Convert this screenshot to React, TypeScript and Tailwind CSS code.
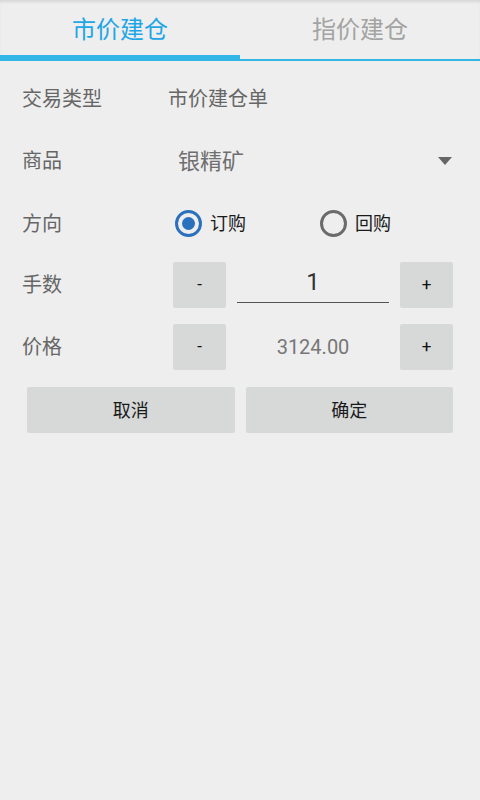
import { useState } from 'react'

const font = "font-['Roboto','Noto_Sans_CJK_SC',sans-serif]"

function Radio({ checked, label, onClick }: { checked: boolean; label: string; onClick: () => void }) {
  return (
    <button onClick={onClick} className="flex items-center gap-[8px]">
      <span
        className={`w-[27px] h-[27px] rounded-full border-[3px] flex items-center justify-center ${
          checked ? 'border-[#2b70bd]' : 'border-[#6b6b6b]'
        }`}
      >
        {checked && <span className="w-[13px] h-[13px] rounded-full bg-[#2b70bd]" />}
      </span>
      <span className="text-[18px] text-[#1a1a1a]">{label}</span>
    </button>
  )
}

function StepButton({ children, onClick }: { children: string; onClick?: () => void }) {
  return (
    <button
      onClick={onClick}
      className="w-[53px] h-[46px] rounded-[2px] bg-[#d7d8d8] text-[17px] text-[#111] flex items-center justify-center"
    >
      {children}
    </button>
  )
}

export default function App() {
  const [tab, setTab] = useState(0)
  const [dir, setDir] = useState(0)
  const [qty, setQty] = useState(1)
  const [price, setPrice] = useState(3124)

  return (
    <main className={`min-h-screen bg-[#eeeeee] ${font}`}>
      {/* Tabs */}
      <div className="h-[61px] flex border-b-2 border-[#33b5e5] shadow-[inset_0_3px_3px_-1px_rgba(0,0,0,0.10)]">
        {['市价建仓', '指价建仓'].map((t, i) => (
          <button
            key={t}
            onClick={() => setTab(i)}
            className={`flex-1 flex items-start justify-center pt-[12px] text-[24px] -mb-[2px] border-b-[6px] ${
              tab === i ? 'text-[#1fa6e6] border-[#33b5e5]' : 'text-[#a3a3a3] border-transparent'
            }`}
          >
            {t}
          </button>
        ))}
      </div>

      <div className="pt-[7px] pl-[22px] pr-[27px]">
        {/* 交易类型 */}
        <div className="h-[62px] flex items-center">
          <span className="w-[146px] text-[20px] text-[#666]">交易类型</span>
          <span className="text-[20px] text-[#666]">市价建仓单</span>
        </div>

        {/* 商品 */}
        <div className="h-[62px] flex items-center">
          <span className="w-[156px] text-[20px] text-[#666]">商品</span>
          <span className="text-[22px] text-[#6f6f6f]">银精矿</span>
          <svg className="ml-auto mr-[1px]" width="14" height="8" viewBox="0 0 14 8">
            <path d="M0 0H14L7 8Z" fill="#666" />
          </svg>
        </div>

        {/* 方向 */}
        <div className="h-[63px] flex items-center">
          <span className="w-[153px] text-[20px] text-[#666]">方向</span>
          <div className="flex items-center gap-[74px]">
            <Radio checked={dir === 0} label="订购" onClick={() => setDir(0)} />
            <Radio checked={dir === 1} label="回购" onClick={() => setDir(1)} />
          </div>
        </div>

        {/* 手数 */}
        <div className="mt-[7px] h-[46px] flex items-center">
          <span className="w-[151px] text-[20px] text-[#666]">手数</span>
          <StepButton onClick={() => setQty(Math.max(1, qty - 1))}>-</StepButton>
          <div className="mx-[11px] flex-1 h-[46px] flex items-start">
            <div className="w-full h-[41px] border-b-[1.5px] border-[#555] flex items-center justify-center">
              <span className="text-[24px] leading-[30px] text-[#333]">{qty}</span>
            </div>
          </div>
          <StepButton onClick={() => setQty(qty + 1)}>+</StepButton>
        </div>

        {/* 价格 */}
        <div className="mt-[16px] h-[46px] flex items-center">
          <span className="w-[151px] text-[20px] text-[#666]">价格</span>
          <StepButton onClick={() => setPrice(price - 1)}>-</StepButton>
          <div className="mx-[11px] flex-1 text-center text-[20px] text-[#777]">{price.toFixed(2)}</div>
          <StepButton onClick={() => setPrice(price + 1)}>+</StepButton>
        </div>
      </div>

      {/* Actions */}
      <div className="mt-[17px] px-[27px] flex gap-[11px]">
        <button className="flex-1 h-[46px] rounded-[2px] bg-[#d7d8d8] text-[18px] text-[#1a1a1a]">取消</button>
        <button className="flex-1 h-[46px] rounded-[2px] bg-[#d7d8d8] text-[18px] text-[#1a1a1a]">确定</button>
      </div>
    </main>
  )
}
